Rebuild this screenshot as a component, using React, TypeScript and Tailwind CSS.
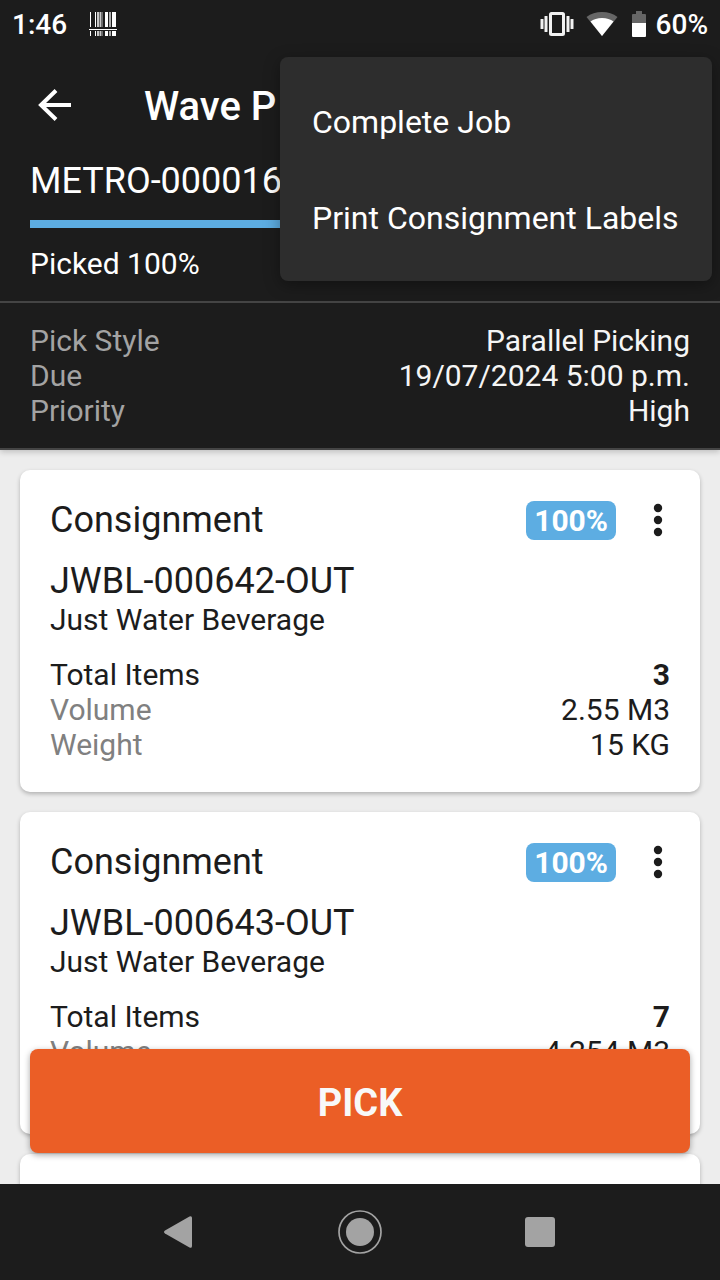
import React from 'react'

interface Consignment {
  id: string
  customer: string
  picked: string
  items: number
  volume: string
  weight: string
}

const consignments: Consignment[] = [
  { id: 'JWBL-000642-OUT', customer: 'Just Water Beverage', picked: '100%', items: 3, volume: '2.55 M3', weight: '15 KG' },
  { id: 'JWBL-000643-OUT', customer: 'Just Water Beverage', picked: '100%', items: 7, volume: '4.254 M3', weight: '35 KG' },
]

const menuItems = ['Complete Job', 'Print Consignment Labels']

const BarcodeIcon = () => (
  <svg width="28" height="24" viewBox="0 0 28 24" fill="#fff" shapeRendering="crispEdges">
    {[[0, 15], [19, 5]].map(([y, h]) => (
      <g key={y}>
        <rect x="1" y={y} width="1" height={h} />
        <rect x="6" y={y} width="1" height={h} />
        <rect x="8" y={y} width="2" height={h} opacity="0.75" />
        <rect x="10" y={y} width="1" height={h} opacity="0.35" />
        <rect x="11" y={y} width="1" height={h} opacity="0.75" />
        <rect x="12" y={y} width="2" height={h} opacity="0.35" />
        <rect x="16" y={y} width="3" height={h} />
        <rect x="20" y={y} width="2" height={h} opacity="0.65" />
        <rect x="23" y={y} width="4" height={h} />
      </g>
    ))}
    <rect x="0" y="17" width="28" height="1" />
  </svg>
)

const VibrateIcon = () => (
  <svg width="34" height="24" viewBox="0 0 34 24" fill="#f2f2f2">
    <rect x="0.5" y="7" width="3" height="10" rx="0.5" />
    <rect x="4.5" y="4" width="3" height="16" rx="0.5" />
    <rect x="26.5" y="4" width="3" height="16" rx="0.5" />
    <rect x="30.5" y="7" width="3" height="10" rx="0.5" />
    <path fillRule="evenodd" d="M11.5 0h11a2.5 2.5 0 0 1 2.5 2.5v19a2.5 2.5 0 0 1-2.5 2.5h-11a2.5 2.5 0 0 1-2.5-2.5v-19a2.5 2.5 0 0 1 2.5-2.5zM12 3v18h10V3z" />
  </svg>
)

const WifiIcon = () => (
  <svg width="32" height="24" viewBox="0 0 32 24">
    <path d="M16 24 0.5 5Q7 0 16 0t15.500 5z" fill="#666" />
    <path d="M16 24 4.500 9.500Q9 6 16 6t11.500 3.500z" fill="#fff" />
  </svg>
)

const BatteryIcon = () => (
  <svg width="14" height="26" viewBox="0 0 14 26">
    <path d="M4 0h6v3h3a1 1 0 0 1 1 1v8H0V4a1 1 0 0 1 1-1h3z" fill="#666" />
    <path d="M0 12h14v13a1 1 0 0 1-1 1H1a1 1 0 0 1-1-1z" fill="#fff" />
  </svg>
)

const StatusBar = () => (
  <div className="flex h-12 shrink-0 items-center justify-between px-3 text-[28px] leading-8 font-medium">
    <div className="flex items-center gap-[22px]">
      <span className="pt-0.5">1:46</span>
      <BarcodeIcon />
    </div>
    <div className="flex items-center">
      <VibrateIcon />
      <span className="ml-3"><WifiIcon /></span>
      <span className="ml-[14px]"><BatteryIcon /></span>
      <span className="ml-[10px] pt-0.5">60%</span>
    </div>
  </div>
)

const OverflowMenu = () => (
  <div role="menu" className="absolute top-[57px] right-2 z-20 w-[432px] rounded-lg bg-[#2d2d2d] py-4 text-white shadow-[0_4px_16px_rgba(0,0,0,0.35)]">
    {menuItems.map(item => (
      <button key={item} role="menuitem" className="flex h-24 w-full items-center px-8 pt-0.5 text-left text-[32px] leading-9 whitespace-nowrap">
        {item}
      </button>
    ))}
  </div>
)

const DetailRow = ({ label, value }: { label: string; value: string }) => (
  <div className="flex justify-between">
    <dt className="text-[#a3a3a3]">{label}</dt>
    <dd className="text-[#f5f5f5]">{value}</dd>
  </div>
)

const ConsignmentCard = ({ item }: { item: Consignment }) => (
  <article className="shrink-0 rounded-[10px] bg-white p-[30px] text-[30px] leading-[35px] shadow-[0_2px_4px_rgba(0,0,0,0.25)]">
    <div className="flex h-10 items-center">
      <h2 className="grow text-[36px] leading-[42px]">Consignment</h2>
      <span className="mt-px rounded-lg bg-[#5dade2] px-2 py-0.5 font-bold text-white">{item.picked}</span>
      <button aria-label="Consignment options" className="ml-[30px] flex w-6 justify-center">
        <svg width="10" height="34" viewBox="0 0 10 34" fill="#1c1c1c">
          <circle cx="5" cy="5" r="4.2" />
          <circle cx="5" cy="17" r="4.2" />
          <circle cx="5" cy="29" r="4.2" />
        </svg>
      </button>
    </div>
    <p className="mt-5 text-[36px] leading-[42px]">{item.id}</p>
    <p>{item.customer}</p>
    <dl className="mt-5">
      <div className="flex justify-between">
        <dt>Total Items</dt>
        <dd className="font-bold">{item.items}</dd>
      </div>
      <div className="flex justify-between">
        <dt className="text-[#808080]">Volume</dt>
        <dd>{item.volume}</dd>
      </div>
      <div className="flex justify-between">
        <dt className="text-[#808080]">Weight</dt>
        <dd>{item.weight}</dd>
      </div>
    </dl>
  </article>
)

const NavBar = () => (
  <nav className="flex h-24 shrink-0 items-center justify-center gap-[136px] bg-[#1c1c1c]">
    <button aria-label="Back" className="flex w-11 justify-center">
      <svg width="32" height="32" viewBox="0 0 32 32">
        <path d="M1 14.500 25.500 0.400Q28-0.500 28 2v28q0 2.500-2.500 1.600L1 17.500Q-1 16 1 14.500z" fill="#a3a3a3" />
      </svg>
    </button>
    <button aria-label="Home">
      <svg width="44" height="44" viewBox="0 0 44 44">
        <circle cx="22" cy="22" r="21" fill="none" stroke="#a3a3a3" strokeWidth="1.700" />
        <circle cx="22" cy="22" r="14" fill="#a3a3a3" />
      </svg>
    </button>
    <button aria-label="Recent apps" className="flex w-11 justify-center">
      <svg width="30" height="30" viewBox="0 0 30 30">
        <rect width="30" height="30" rx="3" fill="#a3a3a3" />
      </svg>
    </button>
  </nav>
)

export default function App() {
  return (
    <div className="relative flex h-screen flex-col overflow-hidden bg-[#ededed] font-[Roboto,sans-serif] text-[#1c1c1c]">
      <header className="relative z-10 shrink-0 border-b-2 border-[#444] bg-[#1c1c1c] text-white shadow-[0_2px_6px_rgba(0,0,0,0.2)]">
        <StatusBar />
        <div className="flex h-28 items-center gap-[72px] px-9 pt-0.5">
          <button aria-label="Go back">
            <svg width="36" height="36" viewBox="0 0 36 36" fill="none" stroke="#fff" strokeWidth="4">
              <path d="M35 18H6M20 3.500 5 18l15 14.500" />
            </svg>
          </button>
          <h1 className="pt-1 text-[40px] leading-[48px] font-medium whitespace-nowrap">Wave P</h1>
        </div>

        {/* Progress */}
        <div className="border-b-2 border-[#444] px-[30px] pb-5 text-[30px] leading-[35px]">
          <p className="text-[36px] leading-[42px]">METRO-000016-</p>
          <div className="my-[18px] h-2 bg-[#5dade2]" />
          <p>Picked 100%</p>
        </div>

        <dl className="px-[30px] py-5 text-[30px] leading-[35px]">
          <DetailRow label="Pick Style" value="Parallel Picking" />
          <DetailRow label="Due" value="19/07/2024 5:00 p.m." />
          <DetailRow label="Priority" value="High" />
        </dl>
      </header>

      <OverflowMenu />

      <main className="relative min-h-0 grow">
        <div className="flex h-full flex-col gap-5 overflow-hidden p-5">
          {consignments.map(item => <ConsignmentCard key={item.id} item={item} />)}
          <div className="h-80 shrink-0 rounded-[10px] bg-white shadow-[0_2px_4px_rgba(0,0,0,0.25)]" />
        </div>
        {/* Floating action over the list */}
        <button className="absolute inset-x-[30px] bottom-[31px] h-[104px] rounded-lg bg-[#eb5e26] pt-1 text-[38px] leading-[44px] font-bold text-[#f8f8f8] shadow-[0_2px_6px_rgba(0,0,0,0.35)]">
          PICK
        </button>
      </main>

      <NavBar />
    </div>
  )
}
